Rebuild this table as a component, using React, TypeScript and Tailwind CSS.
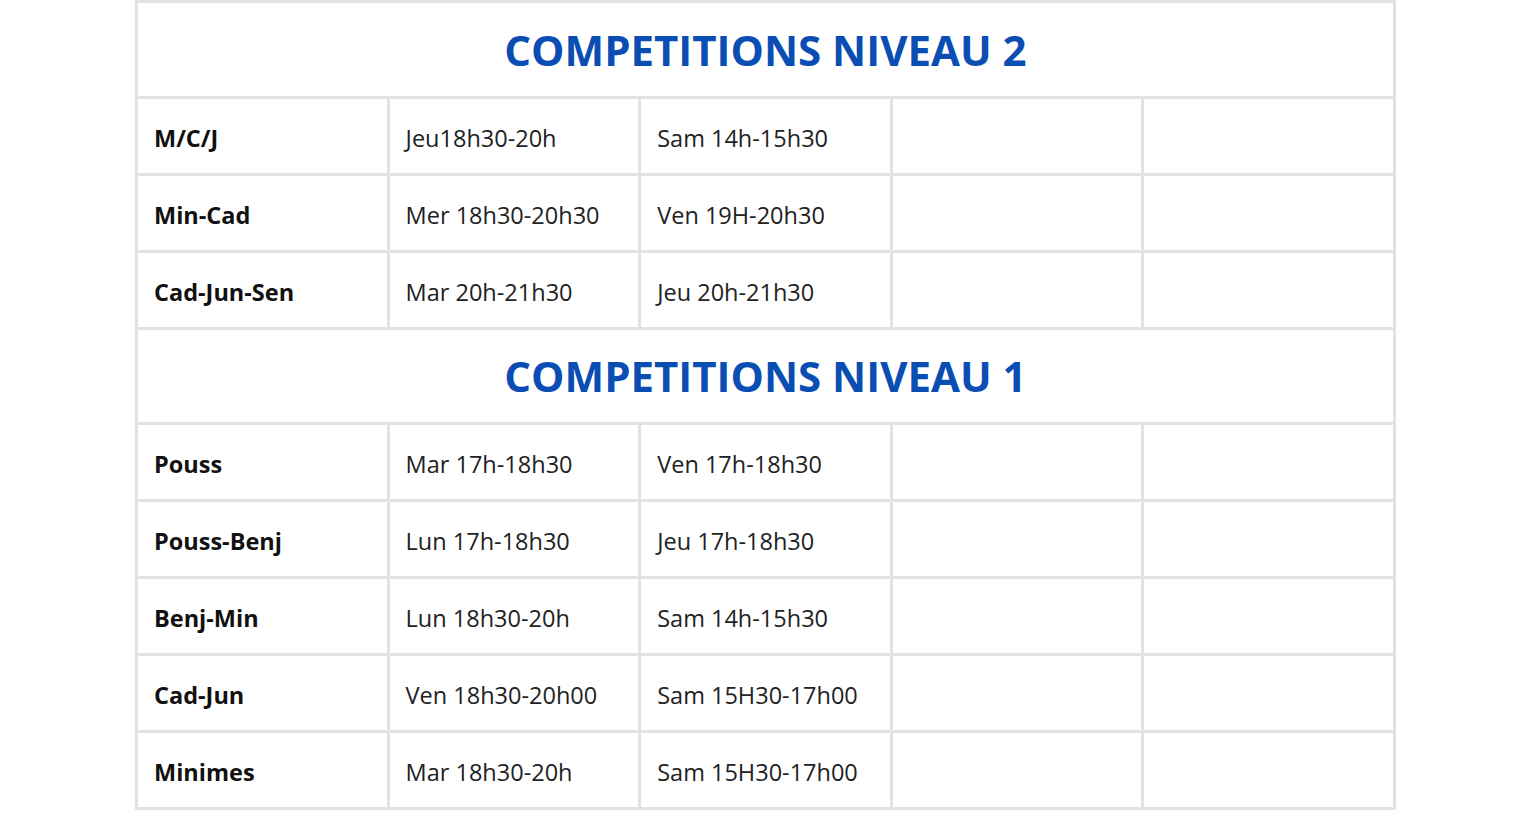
type Row = { name: string; a: string; b: string };

const niveau2: Row[] = [
  { name: "M/C/J", a: "Jeu18h30-20h", b: "Sam 14h-15h30" },
  { name: "Min-Cad", a: "Mer 18h30-20h30", b: "Ven 19H-20h30" },
  { name: "Cad-Jun-Sen", a: "Mar 20h-21h30", b: "Jeu 20h-21h30" },
];

const niveau1: Row[] = [
  { name: "Pouss", a: "Mar 17h-18h30", b: "Ven 17h-18h30" },
  { name: "Pouss-Benj", a: "Lun 17h-18h30", b: "Jeu 17h-18h30" },
  { name: "Benj-Min", a: "Lun 18h30-20h", b: "Sam 14h-15h30" },
  { name: "Cad-Jun", a: "Ven 18h30-20h00", b: "Sam 15H30-17h00" },
  { name: "Minimes", a: "Mar 18h30-20h", b: "Sam 15H30-17h00" },
];

const cell = "border-[3px] border-[#e2e2e2] px-[16px] align-middle";
const dataCell = `${cell} pt-[5px] pb-0`;

function Title({ text, h }: { text: string; h: string }) {
  return (
    <tr className={h}>
      <td
        colSpan={5}
        className={`${cell} text-center text-[42px] font-bold leading-none text-[#0a4db3]`}
      >
        {text}
      </td>
    </tr>
  );
}

function DataRow({ row }: { row: Row }) {
  return (
    <tr className="h-[77px]">
      <td className={`${dataCell} font-bold text-[#111]`}>{row.name}</td>
      <td className={`${dataCell} text-[#222]`}>{row.a}</td>
      <td className={`${dataCell} text-[#222]`}>{row.b}</td>
      <td className={dataCell}></td>
      <td className={dataCell}></td>
    </tr>
  );
}

export default function App() {
  return (
    <div
      className="h-[813px] overflow-hidden bg-white"
      style={{ fontFamily: '"Open Sans", sans-serif' }}
    >
      <table className="ml-[135px] w-[1261px] table-fixed border-collapse text-[23.5px]">
        <tbody>
          <Title text="COMPETITIONS NIVEAU 2" h="h-[96px]" />
          {niveau2.map((r) => (
            <DataRow key={r.name} row={r} />
          ))}
          <Title text="COMPETITIONS NIVEAU 1" h="h-[95px]" />
          {niveau1.map((r) => (
            <DataRow key={r.name} row={r} />
          ))}
        </tbody>
      </table>
    </div>
  );
}
